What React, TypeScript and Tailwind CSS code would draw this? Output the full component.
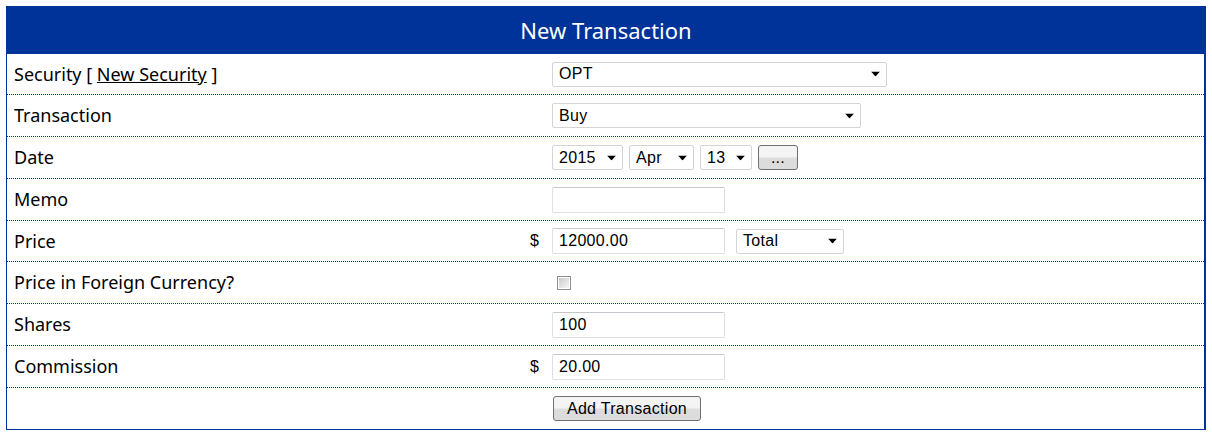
import type { ReactNode } from "react";

const label = "font-['Noto_Sans',sans-serif] text-[18px] text-black";
const ctl = "font-['Liberation_Sans',Arial,sans-serif] text-[16px] tracking-[0.3px] text-black";

function Arrow() {
  return (
    <svg width="9" height="5" viewBox="0 0 9 5" className="pointer-events-none absolute right-[6px] top-1/2 -translate-y-1/2">
      <path d="M0 0 H9 L4.5 5 Z" fill="#000" />
    </svg>
  );
}

function Select({ value, width }: { value: string; width: string }) {
  return (
    <div className={`relative h-[25px] ${width} shrink-0 rounded-[2px] border border-[#d4d4d4] bg-white`}>
      <div className={`${ctl} flex h-full items-center pl-[6px] leading-none`}>{value}</div>
      <Arrow />
    </div>
  );
}

function TextBox({ value = "" }: { value?: string }) {
  return (
    <div className="h-[26px] w-[173px] rounded-[2px] border border-[#dcdfe4] border-t-[#c4c7cc] bg-white">
      <div className={`${ctl} flex h-full items-center pl-[6px] leading-none`}>{value}</div>
    </div>
  );
}

function Button({ children, className = "" }: { children: ReactNode; className?: string }) {
  return (
    <div
      className={`${ctl} flex h-[25px] items-center justify-center rounded-[3px] border border-[#707070] bg-gradient-to-b from-[#f4f4f4] from-45% to-[#dcdcdc] to-55% ${className}`}
    >
      {children}
    </div>
  );
}

interface RowProps {
  title?: ReactNode;
  dollar?: boolean;
  children?: ReactNode;
  h: string;
  last?: boolean;
}

function Row({ title, dollar, children, h, last }: RowProps) {
  return (
    <div className={`flex items-center ${h} ${last ? "" : "border-b border-dotted border-[#003399]"}`}>
      <div className={`${label} w-[523px] shrink-0 pl-[7px]`}>{title}</div>
      <div className={`${ctl} w-[22px] shrink-0`}>{dollar ? "$" : ""}</div>
      <div className="flex items-center">{children}</div>
    </div>
  );
}

export default function App() {
  return (
    <div className="h-[436px] w-[1212px] bg-white pl-[6px] pt-[6px]">
      <div className="w-[1200px]">
        <div className="flex h-[48px] items-center justify-center bg-[#003399]">
          <span className="font-['Noto_Sans',sans-serif] text-[22px] text-white">New Transaction</span>
        </div>
        <div className="border-b border-l border-r-2 border-[#003399]">
          <Row
            h="h-[41px]"
            title={
              <>
                Security [ <span className="underline">New Security</span> ]
              </>
            }
          >
            <Select value="OPT" width="w-[335px]" />
          </Row>
          <Row h="h-[42px]" title="Transaction">
            <Select value="Buy" width="w-[309px]" />
          </Row>
          <Row h="h-[42px]" title="Date">
            <div className="flex gap-[6px]">
              <Select value="2015" width="w-[71px]" />
              <Select value="Apr" width="w-[65px]" />
              <Select value="13" width="w-[52px]" />
              <Button className="w-[40px] text-[13px]">...</Button>
            </div>
          </Row>
          <Row h="h-[42px]" title="Memo">
            <TextBox />
          </Row>
          <Row h="h-[41px]" title="Price" dollar>
            <TextBox value="12000.00" />
            <div className="ml-[11px]">
              <Select value="Total" width="w-[108px]" />
            </div>
          </Row>
          <Row h="h-[42px]" title="Price in Foreign Currency?">
            <div className="ml-[5px] h-[14px] w-[14px] border border-[#8e8f8f] p-[1px]">
              <div className="h-full w-full bg-gradient-to-br from-[#cbcbcb] to-[#f6f6f6]" />
            </div>
          </Row>
          <Row h="h-[42px]" title="Shares">
            <TextBox value="100" />
          </Row>
          <Row h="h-[42px]" title="Commission" dollar>
            <TextBox value="20.00" />
          </Row>
          <Row h="h-[41px]" last>
            <Button className="ml-[1px] w-[148px]">Add Transaction</Button>
          </Row>
        </div>
      </div>
    </div>
  );
}
